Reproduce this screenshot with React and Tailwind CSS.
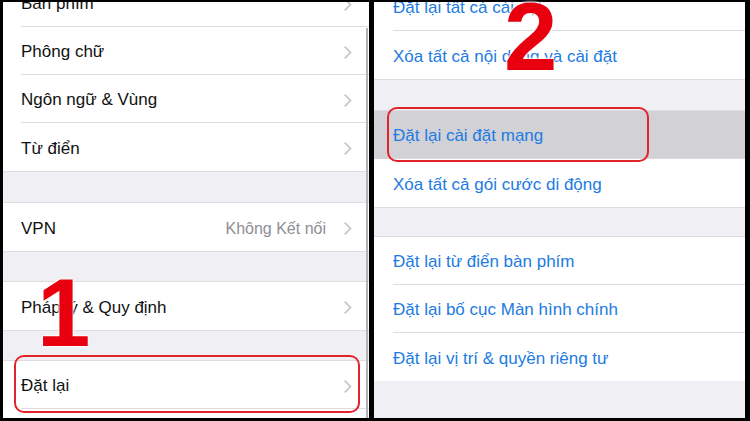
import React from "react";

const font = { fontFamily: '"Liberation Sans", Arial, sans-serif' };

function Chevron() {
    return (
        <svg width="8" height="13" viewBox="0 0 8 13" className="shrink-0">
            <path d="M1.2 1.2l5.3 5.3-5.3 5.3" fill="none" stroke="#c4c4c9" strokeWidth="1.7" strokeLinecap="round" strokeLinejoin="round" />
        </svg>
    );
}

function Row({ label, value, chevron, blue, last, highlight, pad }) {
    return (
        <div className={`h-[48px] flex ${pad} ${highlight ? "bg-[#d1d1d6]" : "bg-white"}`}>
            <div className={`flex-1 flex items-center pr-[17px] pt-[3px] ${last ? "" : "border-b border-[#dcdce0]"}`}>
                <span className={`flex-1 text-[17px] whitespace-nowrap ${blue ? "text-[#217be2]" : "text-[#111]"}`}>{label}</span>
                {value && <span className="text-[16px] text-[#8e8e93] mr-[18px]">{value}</span>}
                {chevron && <Chevron />}
            </div>
        </div>
    );
}

function Band({ h }) {
    return <div className={`${h} bg-[#efeff4] border-y border-[#dedee2]`} />;
}

export default function App() {
    return (
        <div className="w-[750px] h-[421px] bg-black flex pt-[2px] pb-[3px] pl-[3px] relative overflow-hidden" style={font}>
            {/* left screen */}
            <div className="w-[366px] h-full bg-[#efeff4] overflow-hidden relative">
                <div className="-mt-[23px]">
                    <Row pad="pl-[18px]" label="Bàn phím" chevron />
                    <Row pad="pl-[18px]" label="Phông chữ" chevron />
                    <Row pad="pl-[18px]" label="Ngôn ngữ & Vùng" chevron />
                    <Row pad="pl-[18px]" label="Từ điển" chevron last />
                    <Band h="h-[32px]" />
                    <Row pad="pl-[18px]" label="VPN" value="Không Kết nối" chevron last />
                    <Band h="h-[31px]" />
                    <Row pad="pl-[18px]" label="Pháp lý & Quy định" chevron last />
                    <Band h="h-[31px]" />
                    <Row pad="pl-[18px]" label="Đặt lại" chevron />
                    <Row pad="pl-[18px]" label="" />
                </div>
                <div className="absolute right-[1px] top-[26px] bottom-0 w-[2px] bg-[#b4b4b8]" />
            </div>

            <div className="w-[5px]" />

            {/* right screen */}
            <div className="w-[371px] h-full bg-[#efeff4] overflow-hidden">
                <div className="-mt-[19px]">
                    <Row pad="pl-[19px]" label="Đặt lại tất cả cài đặt" blue />
                    <Row pad="pl-[19px]" label="Xóa tất cả nội dung và cài đặt" blue last />
                    <Band h="h-[32px]" />
                    <Row pad="pl-[19px]" label="Đặt lại cài đặt mạng" blue highlight />
                    <Row pad="pl-[19px]" label="Xóa tất cả gói cước di động" blue last />
                    <Band h="h-[30px]" />
                    <Row pad="pl-[19px]" label="Đặt lại từ điển bàn phím" blue />
                    <Row pad="pl-[19px]" label="Đặt lại bố cục Màn hình chính" blue />
                    <Row pad="pl-[19px]" label="Đặt lại vị trí & quyền riêng tư" blue last />
                </div>
            </div>

            {/* annotations */}
            <div className="absolute left-[14px] top-[355px] w-[346px] h-[58px] border-2 border-[#e1232b] rounded-[10px]" />
            <div className="absolute left-[387px] top-[107px] w-[262px] h-[55px] border-2 border-[#e1232b] rounded-[10px]" />
            <div className="absolute left-[37px] top-[265px] text-[96px] leading-none font-bold text-[#e8000f] [text-shadow:0_0_3px_#fff,0_0_3px_#fff,0_0_2px_#fff]">1</div>
            <div className="absolute left-[504px] top-[-11px] text-[96px] leading-none font-bold text-[#e8000f] [text-shadow:0_0_3px_#fff,0_0_3px_#fff,0_0_2px_#fff]">2</div>
        </div>
    );
}
